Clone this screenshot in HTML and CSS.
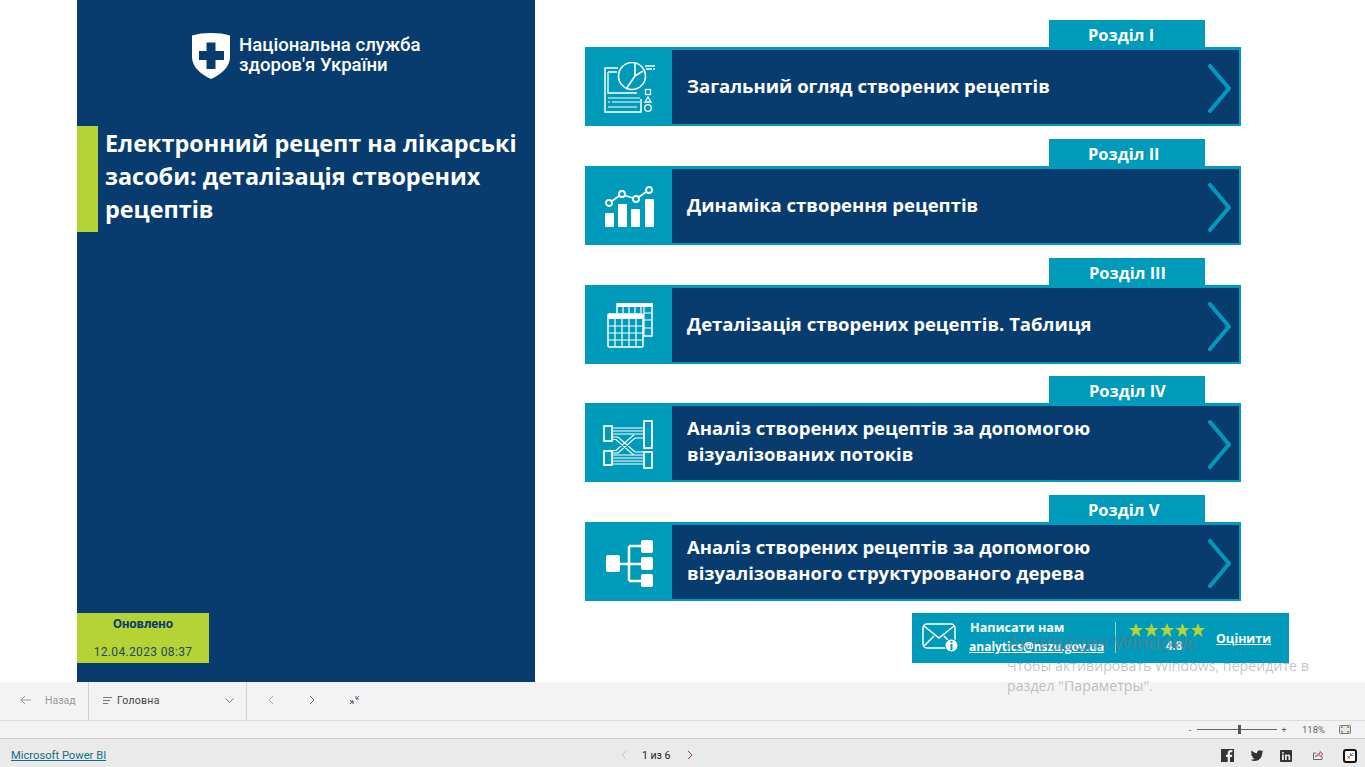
FILE: index.html
```html
<!DOCTYPE html>
<html lang="uk">
<head>
<meta charset="utf-8">
<title>Електронний рецепт</title>
<link rel="stylesheet" href="styles.css">
</head>
<body>
<div class="report">
  <aside class="side">
    <div class="brand">
      <svg class="shield" width="38" height="46" viewBox="0 0 38 46"><path fill="#fff" d="M19 0C26 0 33 .8 38 2.500V24C38 34 29 41.500 19 46 9 41.500 0 34 0 24V2.500C5 .8 12 0 19 0Z"/><path fill="#083c6e" d="M14.500 9.500h9V18H32v9h-8.500v9h-9v-9H7v-9h7.500Z"/></svg>
      <div class="brand-name">Національна служба<br>здоров'я України</div>
    </div>
    <div class="title-row">
      <div class="title-bar"></div>
      <h1 class="title">Електронний рецепт на лікарські засоби: деталізація створених рецептів</h1>
    </div>
    <div class="updated">
      <div class="updated-label">Оновлено</div>
      <div class="updated-date">12.04.2023 08:37</div>
    </div>
  </aside>
  <main class="main">
    <section class="sec">
      <div class="tab">Розділ I</div>
      <div class="card">
        <div class="card-icon">
          <svg width="52" height="52" viewBox="0 0 52 52" fill="none" stroke="#fff" stroke-width="1.300"><path stroke-width="1.500" d="M14 6H1v44h36V37"/><path d="M4 10v21h29M4 10h9"/><path stroke-width="1.200" d="M4 36h32M4 40h2M8 40h28M4 45h29"/><circle cx="28" cy="14" r="13.500" stroke-width="1.600"/><path stroke-width="1.600" d="M31 1v13l8-5M31 14l-9 13"/><path d="M41 4h10M42 7h6M49 7h2"/><rect x="41.500" y="27.500" width="5" height="5"/><path d="M44 35l3 5h-6z"/><circle cx="44" cy="46" r="3.300"/></svg>
        </div>
        <div class="card-body"><span class="card-text">Загальний огляд створених рецептів</span>
          <svg class="chev" width="23" height="49" viewBox="0 0 23 49" fill="none"><path stroke="#009abb" stroke-width="4" stroke-linecap="round" stroke-linejoin="round" d="M2 2l19 22.500L2 47"/></svg>
        </div>
      </div>
    </section>
    <section class="sec">
      <div class="tab">Розділ II</div>
      <div class="card">
        <div class="card-icon">
          <svg width="49" height="41" viewBox="0 0 49 41"><g fill="#fff"><rect x="0" y="27" width="9" height="14" rx="1"/><rect x="13" y="18" width="9" height="23" rx="1"/><rect x="26" y="23" width="9" height="18" rx="1"/><rect x="40" y="13" width="9" height="28" rx="1"/></g><path fill="none" stroke="#fff" stroke-width="1.800" d="M7 15l7-5M20 9.500l8 2.500M34 11l7-5"/><g fill="none" stroke="#fff" stroke-width="1.800"><circle cx="4" cy="17" r="3"/><circle cx="17" cy="8" r="3"/><circle cx="31" cy="13" r="3"/><circle cx="44" cy="4" r="3"/></g></svg>
        </div>
        <div class="card-body"><span class="card-text">Динаміка створення рецептів</span>
          <svg class="chev" width="23" height="49" viewBox="0 0 23 49" fill="none"><path stroke="#009abb" stroke-width="4" stroke-linecap="round" stroke-linejoin="round" d="M2 2l19 22.500L2 47"/></svg>
        </div>
      </div>
    </section>
    <section class="sec">
      <div class="tab tab-shift">Розділ III</div>
      <div class="card">
        <div class="card-icon">
          <svg width="46" height="45" viewBox="0 0 46 45" fill="none" stroke="#fff"><path stroke-width="1.500" d="M10 10V1h35v32h-9"/><path fill="#fff" stroke="none" d="M10 0h36v4H10z"/><path stroke-width="1.200" d="M16 4v6M22 4v6M28 4v6M34 4v6M37 4v29M37 10h8M37 17h8M37 25h8"/><rect x="1" y="11" width="35" height="33" rx="1" stroke-width="1.500"/><path fill="#fff" stroke="none" d="M1 11h35v5H1z"/><path stroke-width="1.200" d="M8 16v28M15 16v28M22 16v28M29 16v28M1 23h35M1 30h35M1 37h35"/></svg>
        </div>
        <div class="card-body"><span class="card-text">Деталізація створених рецептів. Таблиця</span>
          <svg class="chev" width="23" height="49" viewBox="0 0 23 49" fill="none"><path stroke="#009abb" stroke-width="4" stroke-linecap="round" stroke-linejoin="round" d="M2 2l19 22.500L2 47"/></svg>
        </div>
      </div>
    </section>
    <section class="sec">
      <div class="tab tab-shift">Розділ IV</div>
      <div class="card">
        <div class="card-icon">
          <svg class="flow-icon" width="50" height="49" viewBox="0 0 50 49" fill="none" stroke="#fff" stroke-width="1.200"><g stroke-width="1.800"><rect x="1" y="6" width="8" height="15"/><rect x="1" y="31" width="8" height="14"/><rect x="41" y="1" width="8" height="27"/><rect x="41" y="32" width="8" height="16"/></g><path d="M9 8h32M9 11h32M9 14h32M9 35h32M9 38h32M9 41h32M9 44h32"/><path d="M9 17h6l17 15h9M9 19.500h4l17 15h1M9 33h6l17-15h9M9 30.500h4l17-15h1"/></svg>
        </div>
        <div class="card-body"><span class="card-text two">Аналіз створених рецептів за допомогою<br>візуалізованих потоків</span>
          <svg class="chev" width="23" height="49" viewBox="0 0 23 49" fill="none"><path stroke="#009abb" stroke-width="4" stroke-linecap="round" stroke-linejoin="round" d="M2 2l19 22.500L2 47"/></svg>
        </div>
      </div>
    </section>
    <section class="sec">
      <div class="tab">Розділ V</div>
      <div class="card">
        <div class="card-icon">
          <svg width="47" height="47" viewBox="0 0 47 47"><path fill="none" stroke="#fff" stroke-width="2.500" d="M14 24h22M23 6v35M23 6h13M23 41h13"/><g fill="#fff"><rect x="0" y="15" width="14" height="17" rx="2"/><rect x="35" y="0" width="12" height="13" rx="2"/><rect x="35" y="17" width="12" height="13" rx="2"/><rect x="35" y="34" width="12" height="13" rx="2"/></g></svg>
        </div>
        <div class="card-body"><span class="card-text two">Аналіз створених рецептів за допомогою<br>візуалізованого структурованого дерева</span>
          <svg class="chev" width="23" height="49" viewBox="0 0 23 49" fill="none"><path stroke="#009abb" stroke-width="4" stroke-linecap="round" stroke-linejoin="round" d="M2 2l19 22.500L2 47"/></svg>
        </div>
      </div>
    </section>
    <div class="contact">
      <svg class="mail" width="37" height="30" viewBox="0 0 37 30" fill="none"><rect x="1" y="1" width="32" height="24" rx="4" stroke="#fff" stroke-width="1.500"/><path stroke="#fff" stroke-width="1.500" d="M2 3l15 12L32 3M2 23l10-10M32 23L22 13"/><circle cx="29.500" cy="22.500" r="6.500" fill="#fff" stroke="#009abb" stroke-width="1"/><path stroke="#009abb" stroke-width="2" d="M29.500 21v6M29.500 18v1.800"/></svg>
      <div class="contact-text">
        <div class="contact-title">Написати нам</div>
        <div class="contact-mail">analytics@nszu.gov.ua</div>
      </div>
      <div class="contact-div"></div>
      <div class="rating">
        <svg class="stars" width="78" height="14" viewBox="0 0 78 14" fill="#b5d334"><path d="M7 0l2 5h5l-4 3.200L11.500 14 7 10.500 2.500 14 4 8.200 0 5h5z"/><path d="M22.500 0l2 5h5l-4 3.200 1.500 5.800-4.500-3.500L18 14l1.500-5.800-4-3.200h5z"/><path d="M38 0l2 5h5l-4 3.200 1.500 5.800L38 10.500 33.500 14 35 8.200 31 5h5z"/><path d="M53.500 0l2 5h5l-4 3.200 1.500 5.800-4.500-3.500L49 14l1.500-5.800-4-3.200h5z"/><path d="M69 0l2 5h5l-4 3.200 1.500 5.800-4.500-3.500L64.500 14 66 8.200 62 5h5z"/></svg>
        <div class="rating-num">4.8</div>
      </div>
      <div class="rate-link">Оцінити</div>
    </div>
  </main>
</div>
<div class="toolbar">
  <div class="tb-back">
    <svg width="12" height="10" viewBox="0 0 12 10" fill="none"><path stroke="#9a9a9a" d="M11 5H1M5 1L1 5l4 4"/></svg>
    <span>Назад</span>
  </div>
  <div class="tb-page">
    <svg width="10" height="7" viewBox="0 0 10 7" fill="none"><path stroke="#777" d="M0 .5h9M0 3.500h7M0 6.500h5"/></svg>
    <span class="tb-page-name">Головна</span>
    <svg width="9" height="5" viewBox="0 0 9 5" fill="none"><path stroke="#777" d="M.5.5l4 4 4-4"/></svg>
  </div>
  <div class="tb-nav">
    <svg width="7" height="10" viewBox="0 0 7 10" fill="none"><path stroke="#a8a8a8" d="M6 1L2 5l4 4"/></svg>
    <svg width="7" height="10" viewBox="0 0 7 10" fill="none"><path stroke="#666" d="M1 1l4 4-4 4"/></svg>
    <svg width="11" height="10" viewBox="0 0 11 10" fill="none"><path stroke="#3a6ea5" d="M10 1L7 4M7 1v3h3"/><path stroke="#444" d="M1 9l3-3M1 6h3v3"/></svg>
  </div>
</div>
<div class="zoombar">
  <span class="zb-sign">-</span>
  <div class="zb-track"><div class="zb-thumb"></div></div>
  <span class="zb-sign">+</span>
  <span class="zb-pct">118%</span>
  <svg width="12" height="9" viewBox="0 0 12 9" fill="none"><rect x=".5" y=".5" width="11" height="8" rx="1" fill="#efe6d6" stroke="#777"/><path stroke="#3a6ea5" d="M2.500 3V2H4M8 2h1.500v1M9.500 6v1H8M4 7H2.500V6"/></svg>
</div>
<footer class="status">
  <a class="pbi" href="#">Microsoft Power BI</a>
  <div class="pager">
    <svg width="7" height="10" viewBox="0 0 7 10" fill="none"><path stroke="#c4c4c4" d="M6 1L2 5l4 4"/></svg>
    <span>1 из 6</span>
    <svg width="7" height="10" viewBox="0 0 7 10" fill="none"><path stroke="#80406a" d="M1 1l4 4-4 4"/></svg>
  </div>
  <div class="share">
    <svg width="13" height="13" viewBox="0 0 13 13"><path fill="#333" d="M0 0h13v13H9V8h2l.3-2.300H9V4.300c0-.7.200-1.100 1.100-1.100h1.300V1.100C11 1 10.300 1 9.600 1 7.800 1 6.700 2 6.700 4v1.700H5V8h1.700v5H0z"/></svg>
    <svg width="14" height="11" viewBox="0 0 13 11"><path fill="#333" d="M13 1.300l-1.500.4L12.700.3l-1.600.7C9.500-.7 6.300.5 6.500 3.200 4.300 3.100 2.400 2 1 .5.200 1.800.6 3.400 1.700 4.300L.6 4c0 1.300 1 2.400 2.200 2.700l-1.100.1c.3 1.100 1.300 1.800 2.500 1.900C3 9.600 1.500 10 0 9.800c5.500 3.200 12-.5 11.700-7.300z"/></svg>
    <svg width="12" height="12" viewBox="0 0 12 12"><rect width="12" height="12" rx="1" fill="#333"/><path fill="#eaeaea" d="M2 4.500h1.800V10H2zM2 2h1.800v1.600H2zM5 4.500h1.700v.8c.8-1.300 3.500-1.300 3.500 1V10H8.500V7c0-1.300-1.800-1.300-1.800 0v3H5z"/></svg>
    <svg class="share-link" width="12" height="11" viewBox="0 0 12 11" fill="none"><path stroke="#666" d="M10 6v3.500H1.500V3H4"/><path stroke="#b0506a" d="M3.500 7C4 4.500 6 3.500 8 3.500V1.500L11 4 8 6.500V5C6 5 4.500 5.500 3.500 7Z"/></svg>
    <div class="fs-btn"><svg width="9" height="9" viewBox="0 0 9 9" fill="none"><path stroke="#d6803a" d="M1 8l2.500-2.500M1 5h3v3"/><path stroke="#3a6ea5" d="M8 1L5.500 3.500M5 1v3h3"/></svg></div>
  </div>
</footer>
<div class="watermark">
  <div class="wm-title">Активация Windows</div>
  <div class="wm-text">Чтобы активировать Windows, перейдите в<br>раздел "Параметры".</div>
</div>
</body>
</html>
```
FILE: styles.css
```css
* { box-sizing: border-box; }
html, body { margin: 0; padding: 0; }
body { width: 1365px; height: 767px; overflow: hidden; background: #fff; font-family: "Open Sans", "Liberation Sans", sans-serif; position: relative; }

.report { display: flex; height: 682px; padding-left: 77px; background: #fff; }

.side { width: 458px; background: #083c6e; display: flex; flex-direction: column; padding-bottom: 19px; }
.brand { display: flex; align-items: flex-start; gap: 9px; margin: 33px 0 0 115px; height: 46px; }
.shield { flex: none; }
.brand-name { font-family: Roboto, sans-serif; font-weight: 500; font-size: 18.600px; line-height: 20px; color: #fff; white-space: nowrap; padding-top: 2px; }
.title-row { display: flex; margin-top: 47px; height: 106px; }
.title-bar { width: 21px; background: #b5d334; flex: none; }
.title { margin: 0; padding: 1px 10px 0 7px; font-size: 23.400px; line-height: 33px; font-weight: 700; color: #fff; }
.updated { margin-top: auto; width: 132px; height: 50px; background: #b5d334; text-align: center; color: #083c6e; font-family: Roboto, sans-serif; padding-top: 1px; }
.updated-label { font-size: 13px; font-weight: 700; line-height: 20px; }
.updated-date { font-size: 12px; letter-spacing: .35px; line-height: 14px; margin-top: 11px; color: #1f4a5c; }

.main { padding: 20px 0 0 50px; display: flex; flex-direction: column; gap: 12.750px; }
.sec { width: 656px; height: 106px; display: flex; flex-direction: column; }
.tab { height: 27px; width: 156px; margin-left: 464px; background: #009abb; color: #fff; font-weight: 700; font-size: 16.500px; line-height: 29px; padding-left: 39px; white-space: nowrap; }
.tab-shift { padding-left: 40px; }
.card { height: 79px; display: flex; background: #009abb; padding: 3px 2px 2px 0; }
.card-icon { width: 87px; display: flex; align-items: center; justify-content: center; flex: none; padding: 2px 0 0 2px; }
.flow-icon { margin-left: -3px; }
.card-body { flex: 1; background: #083c6e; display: flex; align-items: center; justify-content: space-between; padding: 0 8px 0 15px; }
.card-text { font-size: 18.500px; line-height: 26px; font-weight: 700; color: #fff; white-space: nowrap; margin-bottom: 2px; }
.card-text.two { margin-bottom: 4px; }
.chev { flex: none; margin-top: 3px; }

.contact { width: 377px; height: 50px; margin: -1px 0 0 327px; background: #009abb; display: flex; align-items: center; color: #fff; position: relative; }
.mail { margin-left: 10px; flex: none; }
.contact-text { margin-left: 10px; width: 146px; flex: none; }
.contact-title { font-size: 12.600px; font-weight: 700; line-height: 16px; padding-left: 1px; }
.contact-mail { font-size: 12px; font-weight: 700; line-height: 16px; text-decoration: underline; margin-top: 3px; white-space: nowrap; }
.contact-div { width: 1px; height: 31px; background: #8ecfdd; flex: none; }
.rating { margin-left: 13px; width: 78px; flex: none; position: relative; height: 32px; text-align: center; }
.stars { display: block; margin-top: 1px; }
.rating-num { font-size: 11.500px; font-weight: 700; line-height: 14px; margin-top: 2px; padding-left: 12px; color: #e8f4f7; }
.rate-link { margin: 1px 0 0 9px; font-size: 12.400px; font-weight: 700; text-decoration: underline; }

.toolbar { height: 39px; display: flex; background: #f3f3f3; border-bottom: 1px solid #dcdcdc; }
.tb-back { width: 89px; border-right: 1px solid #d2d2d2; display: flex; align-items: center; padding: 0 0 2px 20px; gap: 13px; font-family: Roboto, sans-serif; font-size: 10.500px; color: #9a9a9a; }
.tb-page { width: 158px; border-right: 1px solid #d2d2d2; display: flex; align-items: center; padding: 0 12px 2px 14px; font-family: Roboto, sans-serif; font-size: 10.500px; letter-spacing: .3px; color: #444; }
.tb-page-name { margin-left: 4px; flex: 1; }
.tb-nav { display: flex; align-items: center; padding: 0 0 2px 20px; gap: 35px; }
.tb-nav svg:last-child { margin-left: -2px; }

.zoombar { height: 18px; background: #f3f3f3; border-bottom: 1px solid #cfcfcf; display: flex; align-items: center; justify-content: flex-end; padding-right: 14px; font-family: Roboto, sans-serif; font-size: 9.500px; color: #666; }
.zb-sign { width: 8px; text-align: center; }
.zb-track { width: 80px; height: 1px; background: #666; margin: 0 3px 0 3px; position: relative; }
.zb-thumb { position: absolute; left: 41px; top: -4px; width: 3px; height: 9px; background: #555; }
.zb-pct { margin: 0 14px 0 14px; }

.status { height: 28px; background: #eaeaea; display: flex; align-items: center; position: relative; padding: 5px 8px 0 11px; font-family: Roboto, sans-serif; }
.pbi { font-size: 11.200px; color: #11707f; text-decoration: underline; }
.pager { position: absolute; left: 620px; top: 2px; height: 28px; display: flex; align-items: center; gap: 15px; font-size: 10.500px; color: #222; }
.pager svg:last-child { margin-left: 2px; }
.share { margin-left: auto; display: flex; align-items: center; gap: 16px; }
.share-link { margin: 0 3px 0 4px; }
.fs-btn { width: 14px; height: 14px; border: 2px solid #111; border-radius: 3px; background: #fff; display: flex; align-items: center; justify-content: center; }
.fs-btn svg { width: 8px; height: 8px; flex: none; }

.watermark { position: absolute; left: 1007px; top: 631px; color: rgba(120,120,120,.6); font-family: "Open Sans", sans-serif; white-space: nowrap; pointer-events: none; }
.wm-title { font-size: 19.500px; line-height: 24px; }
.wm-text { font-size: 14.200px; line-height: 20px; margin-top: 1px; color: rgba(120,120,120,.45); }
```
